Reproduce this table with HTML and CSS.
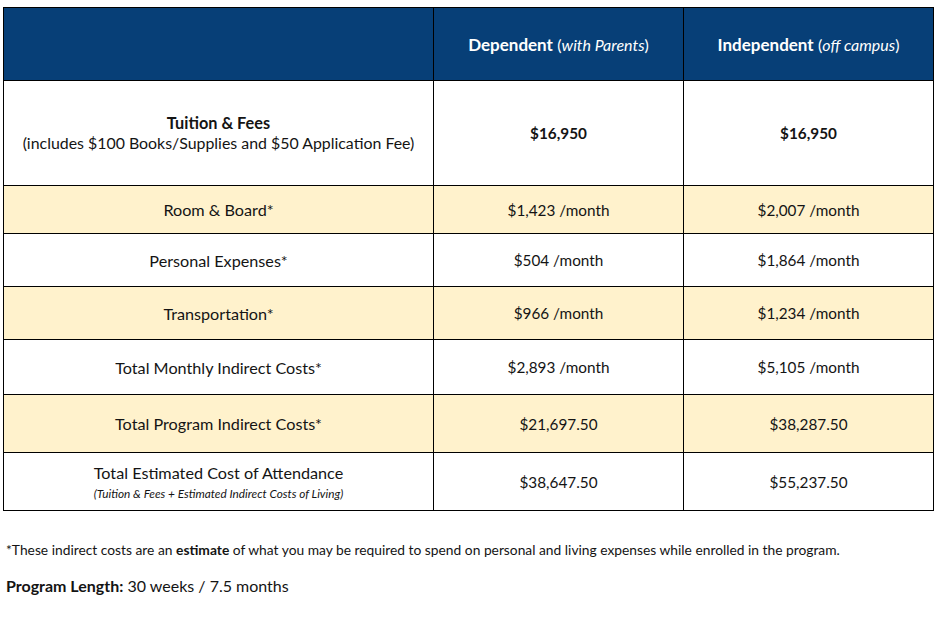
FILE: index.html
```html
<!DOCTYPE html>
<html lang="en">
<head>
<meta charset="utf-8">
<title>Cost of Attendance</title>
<link rel="stylesheet" href="styles.css">
</head>
<body>
<table class="cost">
  <colgroup>
    <col class="c-label">
    <col class="c-val">
    <col class="c-val">
  </colgroup>
  <thead>
    <tr class="r-head">
      <th></th>
      <th><b>Dependent</b> <span class="paren">(<i>with Parents</i>)</span></th>
      <th><b>Independent</b> <span class="paren">(<i>off campus</i>)</span></th>
    </tr>
  </thead>
  <tbody>
    <tr class="r-tuition">
      <td class="lbl"><b class="big">Tuition &amp; Fees</b><br>(includes $100 Books/Supplies and $50 Application Fee)</td>
      <td><b>$16,950</b></td>
      <td><b>$16,950</b></td>
    </tr>
    <tr class="r-alt r-h48">
      <td class="lbl">Room &amp; Board*</td>
      <td>$1,423 /month</td>
      <td>$2,007 /month</td>
    </tr>
    <tr class="r-h53">
      <td class="lbl">Personal Expenses*</td>
      <td>$504 /month</td>
      <td>$1,864 /month</td>
    </tr>
    <tr class="r-alt r-h53">
      <td class="lbl">Transportation*</td>
      <td>$966 /month</td>
      <td>$1,234 /month</td>
    </tr>
    <tr class="r-h55">
      <td class="lbl">Total Monthly Indirect Costs*</td>
      <td>$2,893 /month</td>
      <td>$5,105 /month</td>
    </tr>
    <tr class="r-alt r-h58">
      <td class="lbl">Total Program Indirect Costs*</td>
      <td>$21,697.50</td>
      <td>$38,287.50</td>
    </tr>
    <tr class="r-h58">
      <td class="lbl">Total Estimated Cost of Attendance<br><span class="small">(Tuition &amp; Fees + Estimated Indirect Costs of Living)</span></td>
      <td>$38,647.50</td>
      <td>$55,237.50</td>
    </tr>
  </tbody>
</table>
<p class="note">*These indirect costs are an <b>estimate</b> of what you may be required to spend on personal and living expenses while enrolled in the program.</p>
<p class="length"><b>Program Length:</b> 30 weeks / 7.5 months</p>
</body>
</html>
```
FILE: styles.css
```css
html, body {
  margin: 0;
  background: #ffffff;
}
body {
  padding: 7px 3px 0 3px;
  font-family: Lato, "Open Sans", "Liberation Sans", sans-serif;
  color: #141414;
}
.cost {
  border-collapse: collapse;
  table-layout: fixed;
  width: 931px;
  font-size: 15.3px;
}
.c-label { width: 430px; }
.c-val { width: 250px; }
.cost th, .cost td {
  border: 1px solid #000;
  text-align: center;
  vertical-align: middle;
  padding: 0;
}
.cost td.lbl { font-size: 16.2px; }
.r-head th {
  background: #073f77;
  color: #ffffff;
  height: 72px;
  font-size: 17px;
  font-weight: normal;
}
.r-head .paren { font-size: 16px; }
.r-tuition td {
  height: 104px;
  line-height: 20px;
}
.r-tuition td.lbl { font-size: 15.9px; }
.big { font-size: 16.3px; }
.r-h48 td { height: 47px; }
.r-h53 td { height: 52px; }
.r-h55 td { height: 54px; }
.r-h58 td { height: 57px; }
.r-alt td { background: #fff2cc; }
.small {
  font-size: 11.8px;
  font-style: italic;
}
.note {
  margin: 30px 0 0 3px;
  font-size: 13.8px;
}
.length {
  margin: 18px 0 0 3px;
  font-size: 16px;
}
```
